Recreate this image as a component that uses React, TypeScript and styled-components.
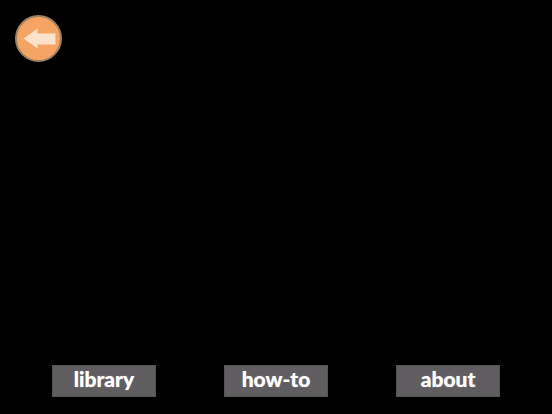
import React from "react";
import styled, { createGlobalStyle } from "styled-components";

const Global = createGlobalStyle`
  html, body { margin: 0; padding: 0; background: #000; }
  body { width: 552px; height: 414px; overflow: hidden; }
`;

const Screen = styled.div`
  width: 552px;
  height: 414px;
  background: #000;
  display: flex;
  flex-direction: column;
  justify-content: space-between;
  padding: 15px 52px 17px 15px;
  box-sizing: border-box;
`;

const BackButton = styled.button`
  width: 47px;
  height: 47px;
  padding: 0 0 0 1px;
  border: 2px solid #9c8062;
  border-radius: 50%;
  background: #f5a463;
  box-sizing: border-box;
  display: flex;
  align-items: center;
  justify-content: center;
  filter: blur(0.6px);
`;

const Menu = styled.nav`
  display: flex;
  gap: 68px;
  margin-left: 37px;
`;

const MenuButton = styled.button`
  width: 104px;
  height: 32px;
  padding: 0 0 5px;
  border: 1px solid #565456;
  background: #5f5d5f;
  box-sizing: border-box;
  color: #fff;
  font-family: "Lato", "Liberation Sans", sans-serif;
  font-weight: 900;
  font-size: 21px;
  line-height: 1;
  text-align: center;
  text-shadow: 0 0 1px rgba(255, 255, 255, 0.6);
`;

export default function App() {
  return (
    <>
      <Global />
      <Screen>
        <BackButton aria-label="back">
          <svg width="33" height="21" viewBox="0 0 33 21">
            <path d="M0.5 10.5 L14.5 0.5 L14.5 5.5 L32.5 5.5 L32.5 16.5 L14.5 16.5 L14.5 20.5 Z" fill="#fbe2cb" />
          </svg>
        </BackButton>
        <Menu>
          <MenuButton>library</MenuButton>
          <MenuButton>how-to</MenuButton>
          <MenuButton>about</MenuButton>
        </Menu>
      </Screen>
    </>
  );
}
